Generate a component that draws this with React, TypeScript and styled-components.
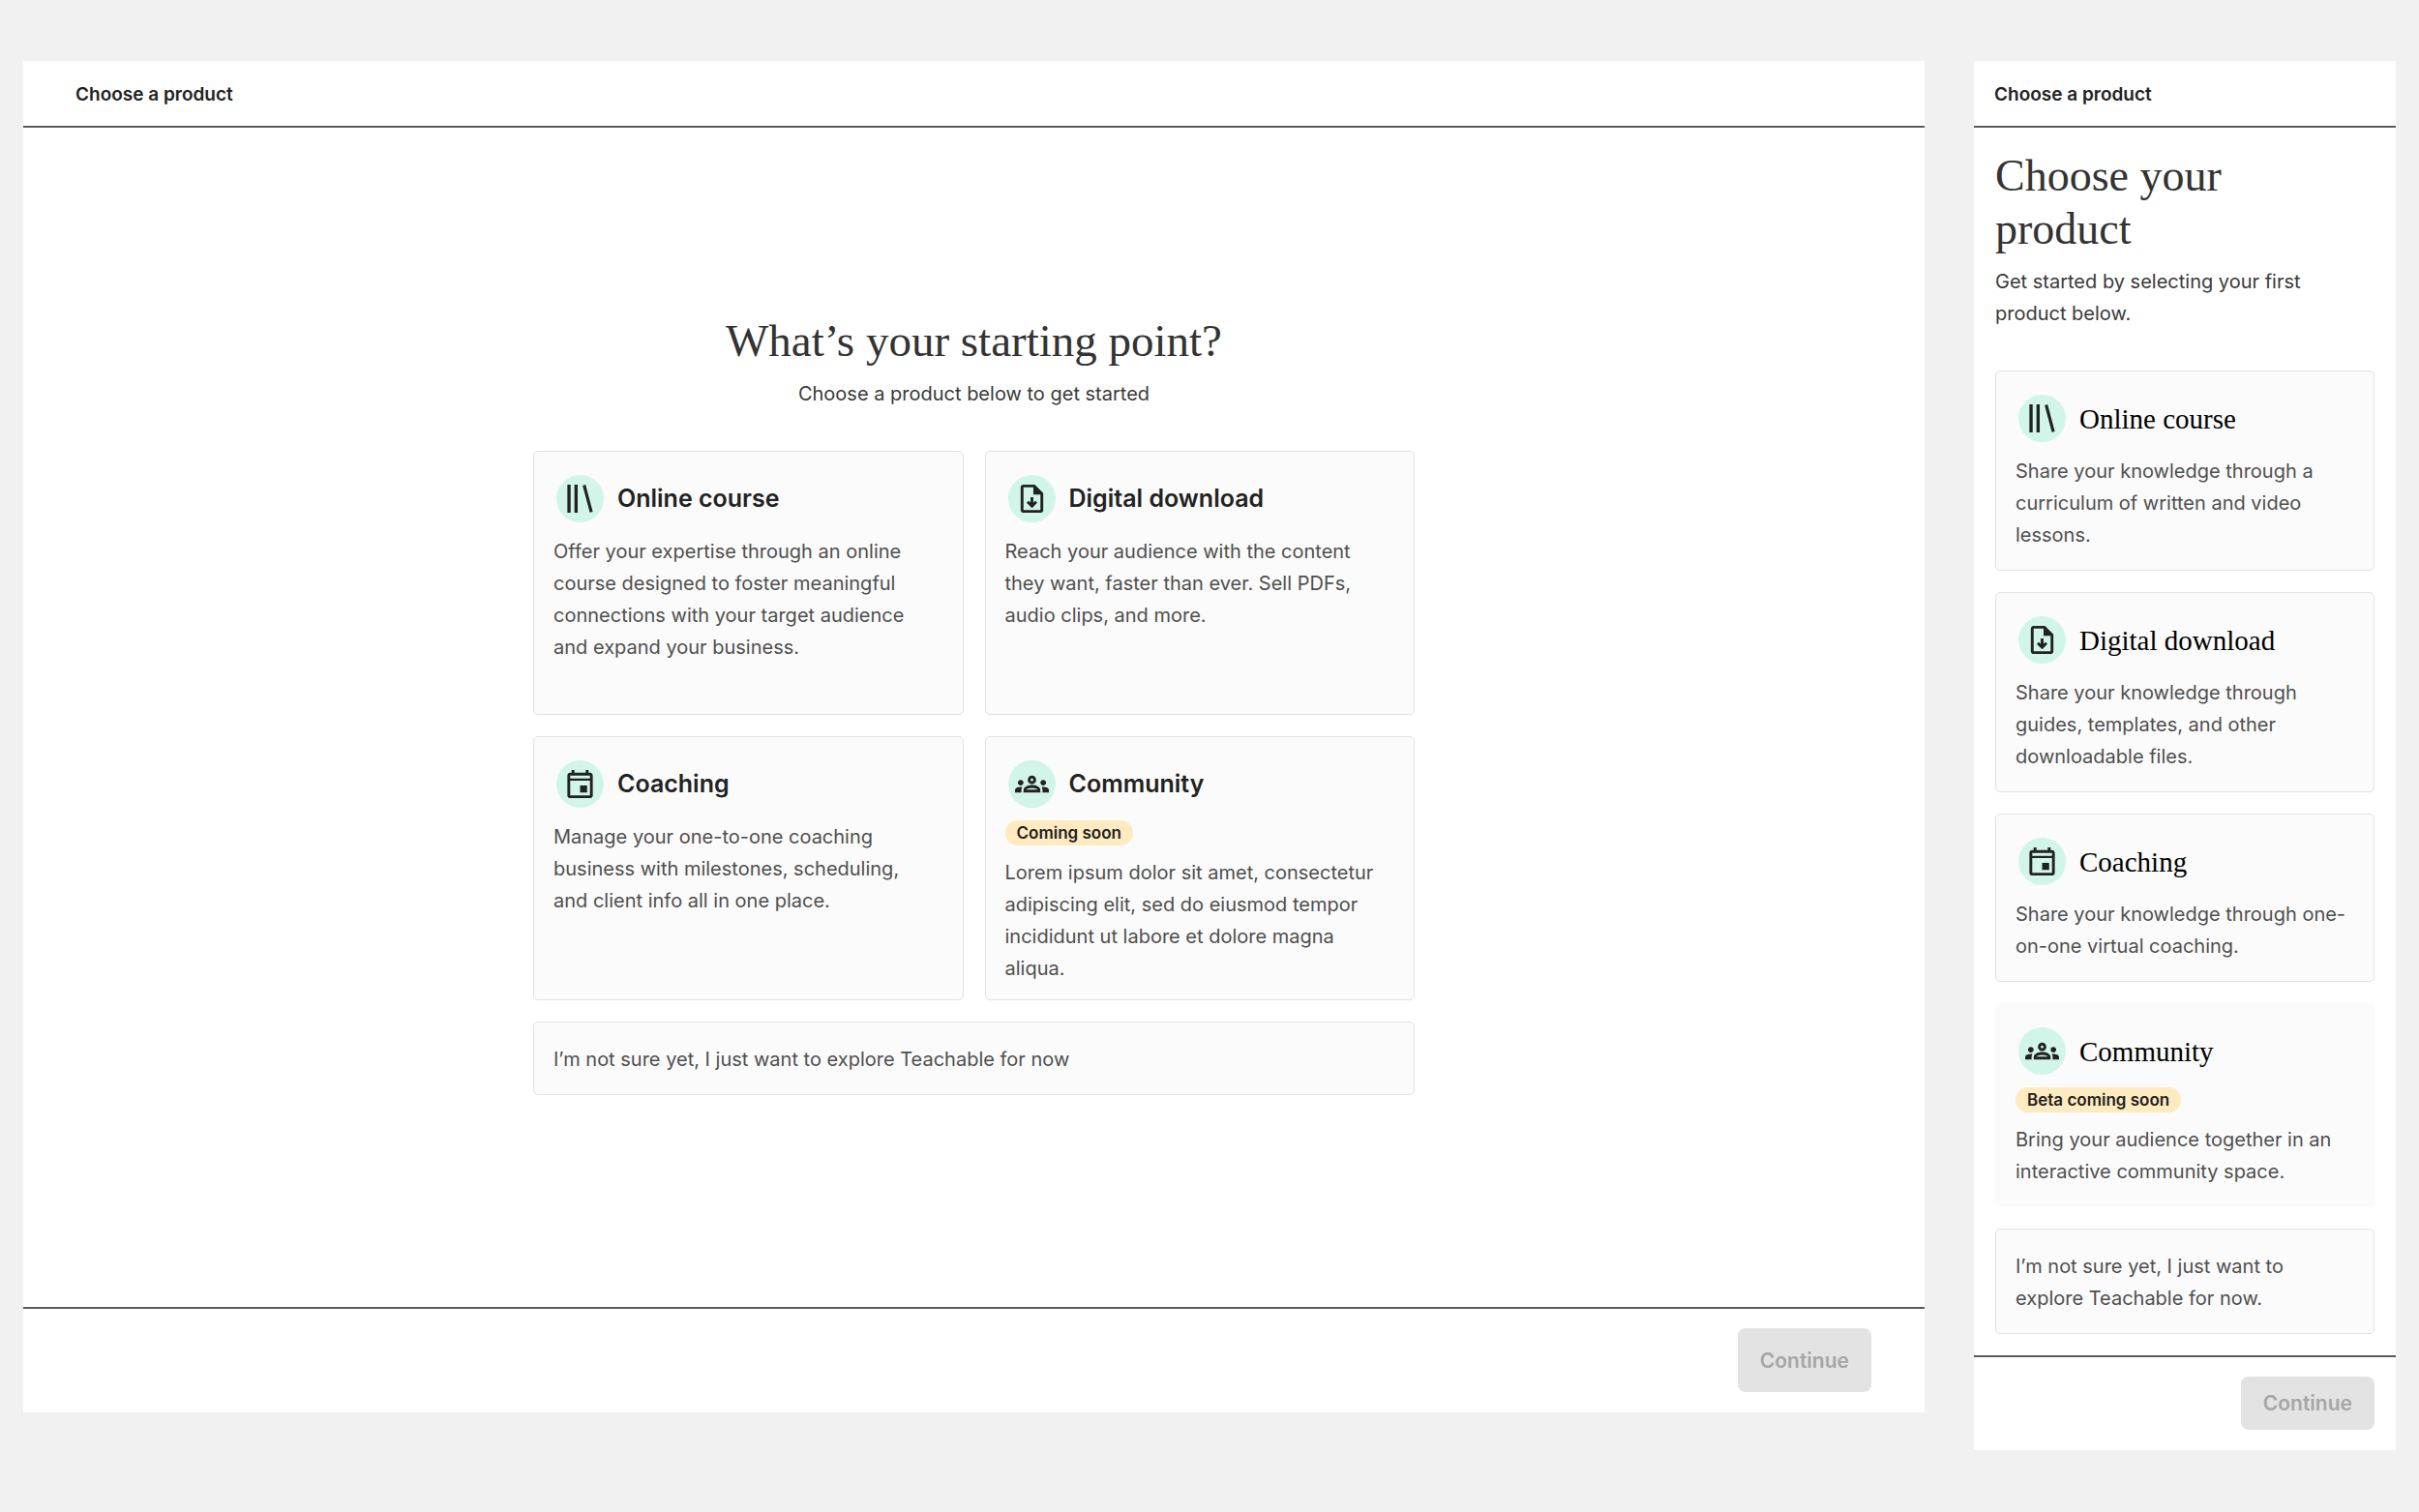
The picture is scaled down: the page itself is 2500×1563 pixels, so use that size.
import React, { useState } from "react";
import styled, { createGlobalStyle, css } from "styled-components";
import { MdOutlineGroups } from "react-icons/md";

const sans = `Inter, "Liberation Sans", sans-serif`;
const serif = `"Liberation Serif", serif`;

const GlobalStyle = createGlobalStyle`
  *, *::before, *::after { box-sizing: border-box; }
  body {
    margin: 0;
    background: #f1f1f1;
    color: #222222;
    font-family: ${sans};
    -webkit-font-smoothing: antialiased;
  }
  h1, h2, p { margin: 0; }
`;

const Page = styled.div`
  display: flex;
  align-items: flex-start;
  gap: 51px;
  padding: 63px 24px;
`;

const Panel = styled.section<{ $narrow?: boolean }>`
  display: flex;
  flex-direction: column;
  min-width: 0;
  background: #ffffff;
  ${({ $narrow }) => ($narrow ? css`flex: 0 0 436px;` : css`flex: 1;`)}
`;

const Header = styled.header<{ $narrow?: boolean }>`
  display: flex;
  align-items: center;
  height: 69px;
  padding: 2px ${({ $narrow }) => ($narrow ? 21 : 54)}px 0;
  border-bottom: 2px solid #5a5a5a;
`;

const HeaderTitle = styled.h1`
  font-size: 19px;
  font-weight: 600;
  line-height: 28px;
`;

const Main = styled.main<{ $narrow?: boolean }>`
  display: flex;
  flex-direction: column;
  align-items: center;
  padding: ${({ $narrow }) => ($narrow ? "22px" : "193px 22px 219px")};
`;

const Content = styled.div`
  width: 100%;
  max-width: 911px;
`;

const Intro = styled.div<{ $narrow?: boolean }>`
  display: flex;
  flex-direction: column;
  gap: 11px;
  margin-bottom: 42px;
  text-align: ${({ $narrow }) => ($narrow ? "left" : "center")};
`;

const Heading = styled.h2<{ $narrow?: boolean }>`
  max-width: ${({ $narrow }) => ($narrow ? "360px" : "none")};
  color: #333333;
  font-family: ${serif};
  font-size: ${({ $narrow }) => ($narrow ? 46 : 47)}px;
  font-weight: 400;
  line-height: 55px;
`;

const Lead = styled.p`
  color: #3a3a3a;
  font-size: 20px;
  line-height: 33px;
`;

const Options = styled.div<{ $narrow?: boolean }>`
  display: grid;
  grid-template-columns: ${({ $narrow }) => ($narrow ? "1fr" : "1fr 1fr")};
  gap: 22px;
`;

const Card = styled.button<{ $tall?: boolean; $wide?: boolean; $plain?: boolean }>`
  display: flex;
  flex-direction: column;
  align-items: flex-start;
  gap: 11px;
  grid-column: ${({ $wide }) => ($wide ? "1 / -1" : "auto")};
  padding: 21px 20px 19px;
  border: 1px solid ${({ $plain }) => ($plain ? "#fbfbfb" : "#e2e2e2")};
  border-radius: 5px;
  background: #fbfbfb;
  color: inherit;
  font-family: inherit;
  text-align: left;
  cursor: pointer;

  ${({ $tall }) =>
    $tall &&
    css`
      min-height: 273px;
      padding-right: 30px;
      padding-bottom: 14px;
    `}

  &[aria-pressed="true"] {
    border-color: #222222;
  }
`;

const CardTop = styled.span`
  display: flex;
  align-items: center;
  gap: 14px;
  height: 54px;
  padding-left: 3px;
`;

const IconCircle = styled.span`
  display: grid;
  place-items: center;
  width: 49px;
  height: 49px;
  border-radius: 50%;
  background: #d2f5ea;
  color: #222222;

  svg {
    display: block;
    width: 35px;
    height: 35px;
  }
`;

const CardTitle = styled.span<{ $serif?: boolean }>`
  font-size: 25px;
  font-weight: 600;
  line-height: 36px;

  ${({ $serif }) =>
    $serif &&
    css`
      padding-top: 2px;
      color: #000000;
      font-family: ${serif};
      font-size: 29px;
      font-weight: 400;
    `}
`;

const Badge = styled.span`
  padding: 0 12px;
  border-radius: 13px;
  background: #ffebbf;
  font-size: 17px;
  font-weight: 600;
  line-height: 26px;
`;

const Description = styled.span`
  padding-top: 1px;
  color: #4f4f4f;
  font-size: 20px;
  line-height: 33px;
`;

const Footer = styled.footer<{ $narrow?: boolean }>`
  display: flex;
  justify-content: flex-end;
  padding: 20px ${({ $narrow }) => ($narrow ? 22 : 55)}px 21px;
  border-top: 2px solid #5a5a5a;
`;

const ContinueButton = styled.button<{ $short?: boolean }>`
  height: ${({ $short }) => ($short ? 55 : 66)}px;
  padding: 0 23px;
  border: 0;
  border-radius: 8px;
  background: #222222;
  color: #ffffff;
  font-family: inherit;
  font-size: 21px;
  font-weight: 600;
  line-height: 33px;

  &:disabled {
    background: #e3e3e3;
    color: #a6a6a6;
  }
`;

const BooksIcon = () => (
  <svg viewBox="0 0 24 24" fill="currentColor" aria-hidden="true">
    <path d="M3 2h2.3v20H3zM8 2h2.3v20H8zM13.8 2.7l2.1-.6L21 21.2l-2.1.6z" />
  </svg>
);

const FileDownloadIcon = () => (
  <svg viewBox="0 0 24 24" fill="currentColor" aria-hidden="true">
    <path d="M14 2H6c-1.1 0-2 .9-2 2v16c0 1.1.9 2 2 2h12c1.1 0 2-.9 2-2V8l-6-6zM6 20V4h7v5h5v11H6z" />
    <path d="M15.8 14.9L12 18.6l-3.8-3.7 1.4-1.4 1.4 1.3V11h2v3.8l1.4-1.3z" />
  </svg>
);

const CalendarIcon = () => (
  <svg viewBox="0 0 24 24" fill="currentColor" aria-hidden="true">
    <path d="M19 4h-1V2h-2v2H8V2H6v2H5c-1.1 0-2 .9-2 2v14c0 1.1.9 2 2 2h14c1.1 0 2-.9 2-2V6c0-1.1-.9-2-2-2zM5 20V9.6h14V20H5zM5 8V6h14v2H5z" />
    <path d="M12 13h5v5h-5z" />
  </svg>
);

const icons = {
  course: <BooksIcon />,
  download: <FileDownloadIcon />,
  coaching: <CalendarIcon />,
  community: <MdOutlineGroups aria-hidden="true" />,
};

type Product = {
  id: keyof typeof icons;
  title: string;
  text: string;
  badge?: string;
  plain?: boolean;
};

const wideProducts: Product[] = [
  {
    id: "course",
    title: "Online course",
    text: "Offer your expertise through an online course designed to foster meaningful connections with your target audience and expand your business.",
  },
  {
    id: "download",
    title: "Digital download",
    text: "Reach your audience with the content they want, faster than ever. Sell PDFs, audio clips, and more.",
  },
  {
    id: "coaching",
    title: "Coaching",
    text: "Manage your one-to-one coaching business with milestones, scheduling, and client info all in one place.",
  },
  {
    id: "community",
    title: "Community",
    badge: "Coming soon",
    text: "Lorem ipsum dolor sit amet, consectetur adipiscing elit, sed do eiusmod tempor incididunt ut labore et dolore magna aliqua.",
  },
];

const narrowProducts: Product[] = [
  {
    id: "course",
    title: "Online course",
    text: "Share your knowledge through a curriculum of written and video lessons.",
  },
  {
    id: "download",
    title: "Digital download",
    text: "Share your knowledge through guides, templates, and other downloadable files.",
  },
  {
    id: "coaching",
    title: "Coaching",
    text: "Share your knowledge through one-on-one virtual coaching.",
  },
  {
    id: "community",
    title: "Community",
    badge: "Beta coming soon",
    text: "Bring your audience together in an interactive community space.",
    plain: true,
  },
];

type ChooserProps = {
  narrow?: boolean;
  heading: string;
  lead: string;
  products: Product[];
  skipText: string;
};

function ProductChooser({ narrow, heading, lead, products, skipText }: ChooserProps) {
  const [selected, setSelected] = useState<string | null>(null);

  return (
    <Panel $narrow={narrow}>
      <Header $narrow={narrow}>
        <HeaderTitle>Choose a product</HeaderTitle>
      </Header>
      <Main $narrow={narrow}>
        <Content>
          <Intro $narrow={narrow}>
            <Heading $narrow={narrow}>{heading}</Heading>
            <Lead>{lead}</Lead>
          </Intro>
          <Options $narrow={narrow}>
            {products.map((product) => (
              <Card
                key={product.id}
                type="button"
                $tall={!narrow}
                $plain={product.plain}
                aria-pressed={selected === product.id}
                onClick={() => setSelected(product.id)}
              >
                <CardTop>
                  <IconCircle>{icons[product.id]}</IconCircle>
                  <CardTitle $serif={narrow}>{product.title}</CardTitle>
                </CardTop>
                {product.badge && <Badge>{product.badge}</Badge>}
                <Description>{product.text}</Description>
              </Card>
            ))}
            <Card
              type="button"
              $wide
              aria-pressed={selected === "skip"}
              onClick={() => setSelected("skip")}
            >
              <Description>{skipText}</Description>
            </Card>
          </Options>
        </Content>
      </Main>
      <Footer $narrow={narrow}>
        <ContinueButton type="button" $short={narrow} disabled={selected === null}>
          Continue
        </ContinueButton>
      </Footer>
    </Panel>
  );
}

export default function App() {
  return (
    <>
      <GlobalStyle />
      <Page>
        <ProductChooser
          heading="What’s your starting point?"
          lead="Choose a product below to get started"
          products={wideProducts}
          skipText="I’m not sure yet, I just want to explore Teachable for now"
        />
        <ProductChooser
          narrow
          heading="Choose your product"
          lead="Get started by selecting your first product below."
          products={narrowProducts}
          skipText="I’m not sure yet, I just want to explore Teachable for now."
        />
      </Page>
    </>
  );
}
